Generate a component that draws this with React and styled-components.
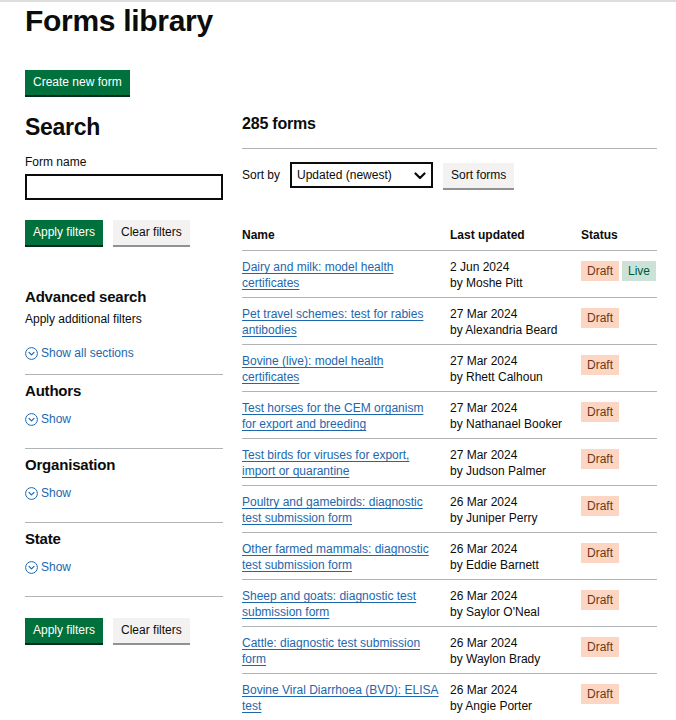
import React from "react";
import styled, { createGlobalStyle } from "styled-components";

const Global = createGlobalStyle`
  html { overflow: hidden; }
  body {
    margin: 0;
    background: #ffffff;
    color: #0b0c0c;
    font-family: "Liberation Sans", Arial, sans-serif;
    font-size: 12px;
    line-height: 16px;
  }
  * { box-sizing: border-box; }
`;

const TopRule = styled.div`
  height: 2px;
  background: #dddddd;
`;

const Page = styled.main`
  padding: 0 19px 0 25px;
`;

const Title = styled.h1`
  margin: 1px 0 0;
  font-size: 30px;
  line-height: 36px;
  font-weight: 700;
  letter-spacing: -0.3px;
`;

const Button = styled.button`
  font-family: inherit;
  font-size: 12px;
  line-height: 15px;
  padding: 5px 8px;
  border: 0;
  border-radius: 0;
  cursor: pointer;
  white-space: nowrap;
  background: ${(p) => (p.$secondary ? "#f3f2f1" : "#00703c")};
  color: ${(p) => (p.$secondary ? "#0b0c0c" : "#ffffff")};
  box-shadow: 0 2px 0 ${(p) => (p.$secondary ? "#929191" : "#002d18")};
`;

const CreateRow = styled.div`
  margin-top: 31px;
  display: flex;
`;

const Columns = styled.div`
  display: grid;
  grid-template-columns: 198px 1fr;
  column-gap: 19px;
  margin-top: 18px;
  align-items: start;
`;

const Sidebar = styled.aside`
  display: flex;
  flex-direction: column;
`;

const SearchTitle = styled.h2`
  margin: 0;
  font-size: 23px;
  line-height: 28px;
  font-weight: 700;
  letter-spacing: -0.3px;
`;

const Label = styled.label`
  margin-top: 13px;
  font-size: 12px;
  line-height: 16px;
`;

const TextInput = styled.input`
  margin-top: 4px;
  width: 100%;
  height: 26px;
  border: 2px solid #0b0c0c;
  border-radius: 0;
  padding: 0 5px;
  font-family: inherit;
  font-size: 12px;
`;

const ButtonRow = styled.div`
  display: flex;
  gap: 10px;
  margin-top: ${(p) => p.$top}px;
`;

const SubTitle = styled.h3`
  margin: 0;
  font-size: 15px;
  line-height: 18px;
  font-weight: 700;
  letter-spacing: -0.2px;
`;

const AdvancedBlock = styled.div`
  margin-top: 43px;
  display: flex;
  flex-direction: column;
`;

const Hint = styled.p`
  margin: 5px 0 0;
  font-size: 12px;
  line-height: 16px;
`;

const ShowLink = styled.a`
  display: inline-flex;
  align-items: center;
  gap: 3px;
  color: #1d67ad;
  text-decoration: none;
  font-size: 12px;
  line-height: 16px;
  margin-top: ${(p) => p.$top || 0}px;
  align-self: flex-start;
  cursor: pointer;
`;

const Sections = styled.div`
  margin-top: 13px;
  border-bottom: 1px solid #b1b4b6;
`;

const Section = styled.section`
  border-top: 1px solid #b1b4b6;
  padding: 7px 0 21px;
  display: flex;
  flex-direction: column;
  gap: 11px;
`;

const Results = styled.section`
  display: flex;
  flex-direction: column;
`;

const Count = styled.h2`
  margin: 0;
  font-size: 16px;
  line-height: 22px;
  font-weight: 700;
  letter-spacing: -0.2px;
`;

const Divider = styled.hr`
  margin: 13px 0 0;
  border: 0;
  border-top: 1px solid #b1b4b6;
  height: 0;
`;

const SortRow = styled.form`
  margin-top: 13px;
  display: flex;
  align-items: flex-start;
`;

const SortLabel = styled.label`
  line-height: 16px;
  margin-top: 5px;
  margin-right: 10px;
`;

const SelectWrap = styled.div`
  position: relative;
  width: 143px;
  margin-right: 10px;
`;

const Select = styled.select`
  appearance: none;
  -webkit-appearance: none;
  width: 100%;
  height: 26px;
  border: 2px solid #0b0c0c;
  border-radius: 0;
  background: #ffffff;
  color: #0b0c0c;
  padding: 0 24px 0 5px;
  font-family: inherit;
  font-size: 12px;
`;

const SelectChevron = styled.svg`
  position: absolute;
  right: 7px;
  top: 10px;
  pointer-events: none;
`;

const SortButton = styled(Button)`
  margin-top: 1px;
`;

const Table = styled.table`
  margin-top: 31px;
  width: 100%;
  border-collapse: collapse;
  table-layout: fixed;
`;

const Th = styled.th`
  text-align: left;
  font-weight: 700;
  font-size: 12px;
  line-height: 16px;
  padding: 8px ${(p) => (p.$last ? 0 : 10)}px 7px 0;
  border-bottom: 1px solid #b1b4b6;
`;

const Td = styled.td`
  vertical-align: top;
  font-size: 12px;
  line-height: 16px;
  padding: 8px ${(p) => (p.$last ? 0 : 10)}px 6px 0;
  border-bottom: 1px solid #b1b4b6;
`;

const FormLink = styled.a`
  color: #1d67ad;
  text-decoration: underline;
  text-decoration-thickness: 1px;
  text-underline-offset: 2px;
  cursor: pointer;
`;

const Tags = styled.div`
  display: flex;
  gap: 3px;
  margin-top: 2px;
  white-space: nowrap;
`;

const Tag = styled.strong`
  display: inline-block;
  font-weight: 400;
  font-size: 12px;
  line-height: 16px;
  padding: 2px 6px;
  background: ${(p) => (p.$live ? "#cce2d8" : "#fcd6c3")};
  color: ${(p) => (p.$live ? "#005a30" : "#6e3619")};
`;

const CircleChevron = () => (
  <svg width="13" height="13" viewBox="0 0 13 13" aria-hidden="true">
    <circle cx="6.5" cy="6.5" r="5.9" fill="none" stroke="currentColor" strokeWidth="1" />
    <path d="M4 5.4 L6.5 7.9 L9 5.4" fill="none" stroke="currentColor" strokeWidth="1.2" strokeLinecap="round" strokeLinejoin="round" />
  </svg>
);

const rows = [
  { name: "Dairy and milk: model health certificates", date: "2 Jun 2024", by: "Moshe Pitt", live: true },
  { name: "Pet travel schemes: test for rabies antibodies", date: "27 Mar 2024", by: "Alexandria Beard" },
  { name: "Bovine (live): model health certificates", date: "27 Mar 2024", by: "Rhett Calhoun" },
  { name: "Test horses for the CEM organism for export and breeding", date: "27 Mar 2024", by: "Nathanael Booker" },
  { name: "Test birds for viruses for export, import or quarantine", date: "27 Mar 2024", by: "Judson Palmer" },
  { name: "Poultry and gamebirds: diagnostic test submission form", date: "26 Mar 2024", by: "Juniper Perry" },
  { name: "Other farmed mammals: diagnostic test submission form", date: "26 Mar 2024", by: "Eddie Barnett" },
  { name: "Sheep and goats: diagnostic test submission form", date: "26 Mar 2024", by: "Saylor O'Neal" },
  { name: "Cattle: diagnostic test submission form", date: "26 Mar 2024", by: "Waylon Brady" },
  { name: "Bovine Viral Diarrhoea (BVD): ELISA test", date: "26 Mar 2024", by: "Angie Porter" },
];

const filterSections = ["Authors", "Organisation", "State"];

export default function App() {
  return (
    <>
      <Global />
      <TopRule />
      <Page>
        <Title>Forms library</Title>
        <CreateRow>
          <Button>Create new form</Button>
        </CreateRow>
        <Columns>
          <Sidebar>
            <SearchTitle>Search</SearchTitle>
            <Label htmlFor="form-name">Form name</Label>
            <TextInput id="form-name" type="text" />
            <ButtonRow $top={20}>
              <Button>Apply filters</Button>
              <Button $secondary>Clear filters</Button>
            </ButtonRow>
            <AdvancedBlock>
              <SubTitle>Advanced search</SubTitle>
              <Hint>Apply additional filters</Hint>
              <ShowLink $top={18}>
                <CircleChevron />
                Show all sections
              </ShowLink>
            </AdvancedBlock>
            <Sections>
              {filterSections.map((s) => (
                <Section key={s}>
                  <SubTitle>{s}</SubTitle>
                  <ShowLink>
                    <CircleChevron />
                    Show
                  </ShowLink>
                </Section>
              ))}
            </Sections>
            <ButtonRow $top={21}>
              <Button>Apply filters</Button>
              <Button $secondary>Clear filters</Button>
            </ButtonRow>
          </Sidebar>
          <Results>
            <Count>285 forms</Count>
            <Divider />
            <SortRow onSubmit={(e) => e.preventDefault()}>
              <SortLabel htmlFor="sort">Sort by</SortLabel>
              <SelectWrap>
                <Select id="sort" defaultValue="updated-newest">
                  <option value="updated-newest">Updated (newest)</option>
                  <option value="updated-oldest">Updated (oldest)</option>
                  <option value="name">Name</option>
                </Select>
                <SelectChevron width="12" height="8" viewBox="0 0 12 8" aria-hidden="true">
                  <path d="M1.5 1.5 L6 6 L10.5 1.5" fill="none" stroke="#0b0c0c" strokeWidth="2.2" strokeLinecap="round" strokeLinejoin="round" />
                </SelectChevron>
              </SelectWrap>
              <SortButton $secondary type="submit">Sort forms</SortButton>
            </SortRow>
            <Table>
              <colgroup>
                <col style={{ width: 208 }} />
                <col style={{ width: 131 }} />
                <col style={{ width: 76 }} />
              </colgroup>
              <thead>
                <tr>
                  <Th>Name</Th>
                  <Th>Last updated</Th>
                  <Th $last>Status</Th>
                </tr>
              </thead>
              <tbody>
                {rows.map((r) => (
                  <tr key={r.name}>
                    <Td>
                      <FormLink>{r.name}</FormLink>
                    </Td>
                    <Td>
                      {r.date}
                      <br />
                      by {r.by}
                    </Td>
                    <Td $last>
                      <Tags>
                        <Tag>Draft</Tag>
                        {r.live && <Tag $live>Live</Tag>}
                      </Tags>
                    </Td>
                  </tr>
                ))}
              </tbody>
            </Table>
          </Results>
        </Columns>
      </Page>
    </>
  );
}
